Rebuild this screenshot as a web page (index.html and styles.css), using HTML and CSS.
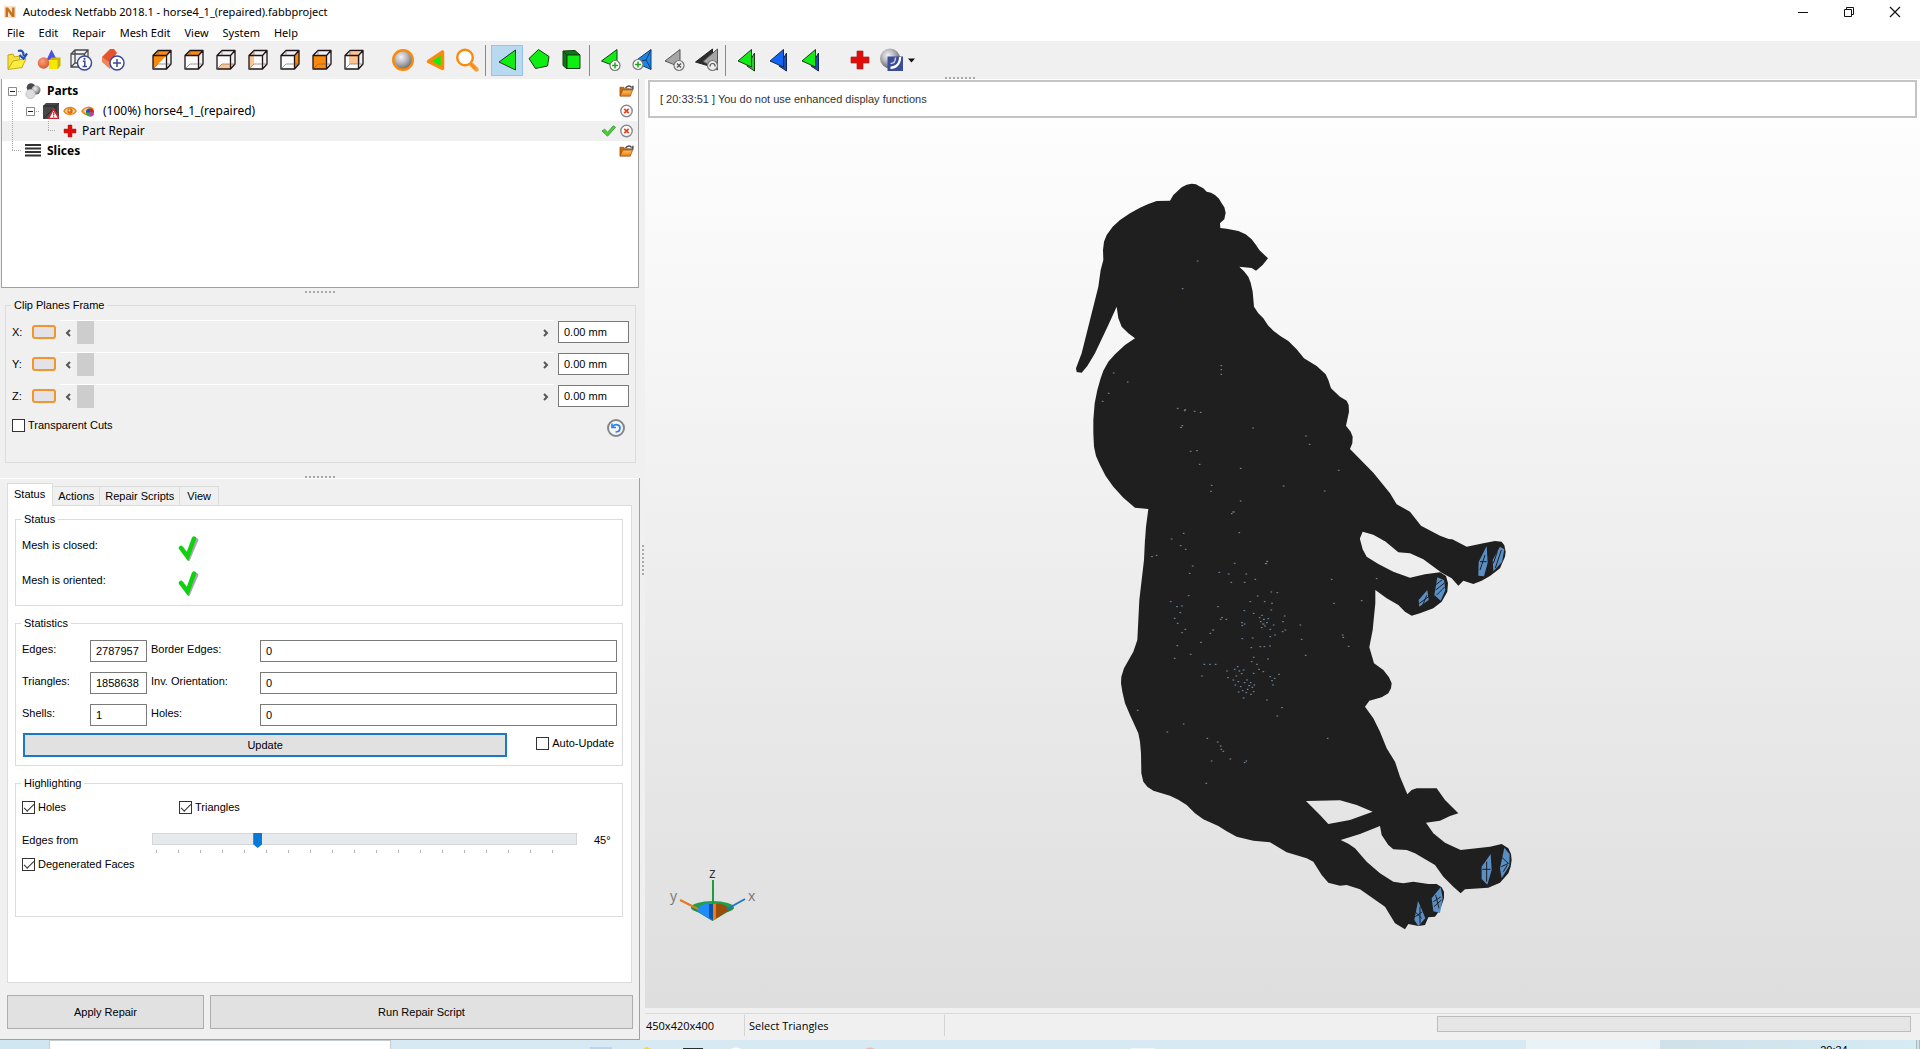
FILE: index.html
```html
<!DOCTYPE html>
<html lang="en">
<head>
<meta charset="utf-8">
<title>Autodesk Netfabb 2018.1 - horse4_1_(repaired).fabbproject</title>
<link rel="stylesheet" href="styles.css">
</head>
<body>
<svg class="defs" aria-hidden="true">
  <defs>
    <radialGradient id="ball" cx=".4" cy=".35" r=".65"><stop offset="0" stop-color="#f4f4f6"/><stop offset=".5" stop-color="#b4b5ba"/><stop offset="1" stop-color="#66686e"/></radialGradient>
    <radialGradient id="redball" cx=".4" cy=".35" r=".7"><stop offset="0" stop-color="#f9a27c"/><stop offset="1" stop-color="#d9542a"/></radialGradient>
    <linearGradient id="folderg" x1="0" y1="0" x2="0" y2="1"><stop offset="0" stop-color="#ffc060"/><stop offset="1" stop-color="#ea7d10"/></linearGradient>
  </defs>
  <symbol id="cube" viewBox="0 0 24 24"><g fill="none" stroke="#1e1418" stroke-width="1.300" stroke-linejoin="round"><path d="M3 7.500h13.500v13.500H3zM3 7.500l5-5h13v13.500l-4.500 5M16.500 7.500l4.500-5"/></g><path d="M8 3v4.500M8 16h8.500M17 16h4M8 16l-5 5" fill="none" stroke="#665c60" stroke-width=".6"/></symbol>
  <symbol id="folder" viewBox="0 0 16 14"><path d="M1 12V3h4l1.500 1.500H11V7" fill="#c9690e" stroke="#8a4a10" stroke-width=".7"/><path d="M1 12.500 4 6h10.500L12 12.500z" fill="url(#folderg)" stroke="#8a4a10" stroke-width=".7"/><path d="M7 4c2-3 5-3 6.500-.5M14.800 1.500V5h-3.500" fill="none" stroke="#4a4a4e" stroke-width="1.500"/></symbol>
  <symbol id="remove" viewBox="0 0 14 14"><circle cx="7" cy="7" r="5.700" fill="#fff" stroke="#85878d" stroke-width="1.400"/><path d="M4.800 4.800l4.400 4.400M9.200 4.800 4.800 9.200" stroke="#e8431c" stroke-width="1.800"/></symbol>
  <symbol id="eye" viewBox="0 0 14 12"><path d="M1 6.200C3.500 1.300 10.500 1.300 13 6.200 10.500 10.500 3.500 10.500 1 6.200z" fill="#fbd3a0" stroke="#e9861a" stroke-width="1.500"/><circle cx="7" cy="6" r="2.700" fill="#d96d05"/><circle cx="6.500" cy="5.500" r="1" fill="#ffe9c8"/></symbol>
  <symbol id="cross" viewBox="0 0 24 24"><path d="M9 3h6v6h6v6h-6v6H9v-6H3V9h6z" fill="#e20d0a" stroke="#9e2a26" stroke-width=".7"/></symbol>
  <symbol id="bigcheck" viewBox="0 0 22 26"><path d="M4 14l6.500 8.500L18 5" fill="none" stroke="#8a6f98" stroke-width="4.500" stroke-linecap="round" opacity=".65"/><path d="M3 13l6.500 8.500L16 3.500" fill="none" stroke="#0fd20f" stroke-width="4.500" stroke-linecap="round"/></symbol>
  <symbol id="minus" viewBox="0 0 9 9"><path d="M.5.5h8v8h-8z" fill="#fff" stroke="#8a8a8a"/><path d="M2 4.500h5" stroke="#222"/></symbol>
</svg>

<header class="titlebar">
  <svg class="logo" viewBox="0 0 14 14"><path d="M1 1h12v12H1z" fill="#f8e2c8"/><path d="M2.500 12V2.500h2.600l4 5.600V2.500h2.400V12H9L5 6.300V12z" fill="#c8701c"/></svg>
  <h1>Autodesk Netfabb 2018.1 - horse4_1_(repaired).fabbproject</h1>
  <div class="window-controls">
    <button aria-label="Minimize"><svg viewBox="0 0 12 12"><path d="M1 6.500h10" stroke="#111"/></svg></button>
    <button aria-label="Restore"><svg viewBox="0 0 12 12"><path d="M1.500 3.500h7v7h-7zM3.500 3.500v-2h7v7h-2" fill="none" stroke="#111"/></svg></button>
    <button aria-label="Close"><svg viewBox="0 0 12 12"><path d="M1 1l10 10M11 1 1 11" stroke="#111" stroke-width="1.200"/></svg></button>
  </div>
</header>

<nav class="menu">
  <button>File</button><button>Edit</button><button>Repair</button><button>Mesh Edit</button><button>View</button><button>System</button><button>Help</button>
</nav>

<div class="toolbar" role="toolbar">
  <div class="tools">
    <button aria-label="Open"><svg viewBox="0 0 24 24"><path d="M3 21V7l5-1 1.500 3 5-1v4" fill="#f5e23c" stroke="#c5a514" stroke-width="1"/><path d="M3 21.500 8 13l13-2.500-4 9z" fill="#fbee3c" stroke="#c9ab18"/><path d="M13 3c4-1.500 6 1 5.500 5M14.500 7l4 3.500L22 5.500" fill="none" stroke="#2350b4" stroke-width="2.200"/></svg></button>
    <button aria-label="Primitives"><svg viewBox="0 0 24 24"><path d="M14.500 1.500 20 12H9.500z" fill="#4a50e4"/><circle cx="6.500" cy="15" r="5.800" fill="url(#redball)"/><path d="M12 12l3-2.500h8.500v8L21 21h-9z" fill="#c9b400"/><path d="M12 12h8.500v9H12z" fill="#f6e800"/></svg></button>
    <button aria-label="Part information"><svg viewBox="0 0 24 24"><g fill="none" stroke="#4a4a4e" stroke-width="1.300"><path d="M2 6l4-4h13v11M2 6h13.500v13H2zM15.500 6 19 2M6 2v13l-4 4M6 15h12"/></g><circle cx="15.500" cy="15" r="7" fill="#fff" stroke="#3c4a94" stroke-width="1.500"/><path d="M13.800 13.300h2v5M13.500 18.500h4.500" fill="none" stroke="#3c4a94" stroke-width="1.500"/><circle cx="15.500" cy="10.800" r="1.100" fill="#3c4a94"/></svg></button>
    <button aria-label="Add part"><svg viewBox="0 0 24 24"><path d="M1 9 9 1h4l3 4-9 12-5-3z" fill="#e5542e"/><path d="M1 9v5l8 7 2-5z" fill="#f38455"/><circle cx="16" cy="15" r="7" fill="#fff" stroke="#3c4a94" stroke-width="1.500"/><path d="M12 15h8M16 11v8" stroke="#3c4a94" stroke-width="1.500"/></svg></button>
  </div>
  <div class="tools">
    <button aria-label="Isometric view"><svg viewBox="0 0 24 24"><path d="M3 7.500h13.500v13.500H3z" fill="#fafafa"/><path d="M3 7.500l5-5h13l-4.500 5zM3 7.500h13.500L3 21z" fill="#fb8a0a"/><use href="#cube"/></svg></button>
    <button aria-label="Top view"><svg viewBox="0 0 24 24"><path d="M3 7.500h13.500v13.500H3z" fill="#fafafa"/><path d="M3 7.500l5-5h13l-4.500 5z" fill="#fb8a0a"/><use href="#cube"/></svg></button>
    <button aria-label="Bottom view"><svg viewBox="0 0 24 24"><path d="M3 7.500h13.500v13.500H3z" fill="#fafafa"/><path d="M3 21l5-5h13l-4.500 5z" fill="#fcc48c"/><use href="#cube"/></svg></button>
    <button aria-label="Left view"><svg viewBox="0 0 24 24"><path d="M3 7.500h13.500v13.500H3z" fill="#fafafa"/><path d="M3 7.500l5-5V16l-5 5z" fill="#fcc48c"/><use href="#cube"/></svg></button>
    <button aria-label="Right view"><svg viewBox="0 0 24 24"><path d="M3 7.500h13.500v13.500H3z" fill="#fafafa"/><path d="M16.500 7.500l4.500-5V16l-4.500 5z" fill="#fb8a0a"/><use href="#cube"/></svg></button>
    <button aria-label="Front view"><svg viewBox="0 0 24 24"><path d="M3 7.500h13.500v13.500H3z" fill="#fb8a0a"/><use href="#cube"/></svg></button>
    <button aria-label="Back view"><svg viewBox="0 0 24 24"><path d="M3 7.500h13.500v13.500H3z" fill="#fafafa"/><path d="M7 4h11v12H7z" fill="#fcc48c"/><use href="#cube"/></svg></button>
  </div>
  <div class="tools">
    <button aria-label="Zoom to all"><svg viewBox="0 0 24 24"><circle cx="12" cy="12" r="9.800" fill="url(#ball)" stroke="#fb8a0a" stroke-width="2.400"/></svg></button>
    <button aria-label="Zoom to triangle"><svg viewBox="0 0 24 24"><path d="M19.500 4v16.500L5.500 13.500z" fill="#10ee10" stroke="#fb8a0a" stroke-width="3.500" stroke-linejoin="round"/></svg></button>
    <button aria-label="Zoom"><svg viewBox="0 0 24 24"><circle cx="10" cy="9.500" r="7.800" fill="#fff" stroke="#fb8a0a" stroke-width="2.400"/><path d="M16.500 16.500l5 5" stroke="#f0a040" stroke-width="4.500" stroke-linecap="round"/><path d="M15 15l5.500 6" stroke="#fb8a0a" stroke-width="2"/></svg></button>
  </div>
  <div class="tools ruled">
    <button class="selected" aria-label="Select triangles"><svg viewBox="0 0 24 24"><path d="M20.500 2v20L4 14z" fill="#0fee12" stroke="#1c3a1c"/></svg></button>
    <button aria-label="Select surface"><svg viewBox="0 0 24 24"><path d="M11.500 1.500 22 8.500 20.500 18l-12 2.500L2 10.500z" fill="#0fee12" stroke="#1c3a1c"/></svg></button>
    <button aria-label="Select shells"><svg viewBox="0 0 24 24"><path d="M4 3l12-.5L21 7H8zM4 3v14.500L8 21V7z" fill="#087c0c" stroke="#123c12"/><path d="M8 7h13v13.500H8z" fill="#0fee12" stroke="#1c3a1c"/></svg></button>
  </div>
  <div class="tools ruled">
    <button aria-label="Add triangle"><svg viewBox="0 0 24 24"><path d="M18 1.500V19L2.500 13z" fill="#0fee12" stroke="#1c3a1c"/><circle cx="16" cy="17.500" r="5" fill="#fff" stroke="#777" stroke-width="1.200"/><path d="M13 17.500h6M16 14.500v6" stroke="#18a818" stroke-width="1.500"/></svg></button>
    <button aria-label="Add node"><svg viewBox="0 0 24 24"><path d="M20 1.500v20L3 14z" fill="#1a86e8" stroke="#123c70"/><path d="M20 2l-5 10 5 9M15 12 3 14" fill="none" stroke="#123c70"/><circle cx="7" cy="16.500" r="5" fill="#fff" stroke="#777" stroke-width="1.200"/><path d="M4 16.500h6M7 13.500v6" stroke="#18a818" stroke-width="1.500"/></svg></button>
    <button aria-label="Remove triangle"><svg viewBox="0 0 24 24"><path d="M17 1.500V19L2 13z" fill="#a6a6a6" stroke="#555"/><circle cx="16" cy="17.500" r="5" fill="#eee" stroke="#777" stroke-width="1.200"/><path d="M14 15.500l4 4M18 15.500l-4 4" stroke="#555" stroke-width="1.300"/></svg></button>
    <button aria-label="Flip triangle"><svg viewBox="0 0 24 24"><path d="M17.500 1v18L.5 14z" fill="#2c2c2e" stroke="#222"/><path d="M22.500 1v21L8 13.500z" fill="#a6a6a6" stroke="#555"/><circle cx="17.500" cy="17.500" r="5" fill="#eee" stroke="#777" stroke-width="1.200"/><path d="M15 18.500c0-4 5.500-4 5 0" fill="none" stroke="#555" stroke-width="1.200"/></svg></button>
  </div>
  <div class="tools ruled">
    <button aria-label="Select all"><svg viewBox="0 0 24 24"><path d="M19.500 5v18L12 18z" fill="#3ac03a" stroke="#1c3a1c"/><path d="M16.500 1.500V19L3 13z" fill="#0fee12" stroke="#1c3a1c"/></svg></button>
    <button aria-label="Deselect all"><svg viewBox="0 0 24 24"><path d="M19.500 5v18L12 18z" fill="#1850b0" stroke="#16264c"/><path d="M16.500 1.500V19L3 13z" fill="#0f66f4" stroke="#16264c"/></svg></button>
    <button aria-label="Invert selection"><svg viewBox="0 0 24 24"><path d="M19.500 5v18L12 18z" fill="#1850b0" stroke="#16264c"/><path d="M16.500 1.500V19L3 13z" fill="#0fee12" stroke="#1c3a1c"/></svg></button>
  </div>
  <div class="tools">
    <button aria-label="Repair"><svg viewBox="0 0 24 24"><use href="#cross"/></svg></button>
    <button aria-label="Shell"><svg viewBox="0 0 24 24"><circle cx="10" cy="10.500" r="10" fill="url(#ball)"/><path d="M7.500 8.500H23V23H7.500z" fill="#3b4c98"/><path d="M10.500 18.500c5 0 8.500-3.500 8.500-9.500h2.200c0 7.500-4.500 12-10.700 12z" fill="#fff"/><path d="M10.500 15.500c3 0 5-2 5-6" fill="none" stroke="#c8cde2" stroke-width="1.500"/></svg></button>
    <svg class="caret" viewBox="0 0 7 5"><path d="M0 .5h7L3.500 4.500z" fill="#111"/></svg>
  </div>
  <span class="grip toolbar-grip"></span>
</div>

<main class="workspace">
  <aside class="side">
    <ul class="tree">
      <li class="root"><span class="guide"><svg class="box"><use href="#minus"/></svg></span>
        <svg class="ico16" viewBox="0 0 16 16"><circle cx="6" cy="4.500" r="4.300" fill="#48484c"/><circle cx="11" cy="7" r="4.500" fill="url(#ball)"/><circle cx="5.500" cy="11" r="4.700" fill="#dcdcde" stroke="#a8a8ac" stroke-width=".5"/></svg>
        <strong>Parts</strong><span class="acts"><button aria-label="Open part"><svg class="act"><use href="#folder"/></svg></button></span></li>
      <li class="child"><span class="guide"><svg class="box"><use href="#minus"/></svg></span>
        <svg class="ico16" viewBox="0 0 16 16"><path d="M0 3l3-3h13v13l-3 3H0z" fill="#47474a"/><path d="M0 3h13v13M13 3l3-3M1 15 12 4" fill="none" stroke="#222" stroke-width=".8"/><path d="M10.500 6 16 15.500H5.500z" fill="#fff" stroke="#d81e2c" stroke-width="1.500"/><path d="M10.700 9v3.500M10.700 13.200v1.300" stroke="#d81e2c" stroke-width="1.200"/></svg>
        <svg class="eye"><use href="#eye"/></svg>
        <svg class="eye" viewBox="0 0 14 12"><path d="M1 6C4 1.500 9 1.500 12 4L8 9.500C5 10 3 9 1 6z" fill="#fbd3a0" stroke="#e9861a" stroke-width="1.500"/><circle cx="9" cy="7.500" r="4" fill="#28b428"/><path d="M9 7.500V3.500a4 4 0 0 1 4 4z" fill="#e02020"/><path d="M9 7.500h4a4 4 0 0 1-4 4z" fill="#d030c8"/><path d="M9 7.500H5a4 4 0 0 1 4-4z" fill="#2448e8"/></svg>
        <span class="name">(100%) horse4_1_(repaired)</span><span class="acts"><button aria-label="Remove part"><svg class="act"><use href="#remove"/></svg></button></span></li>
      <li class="leaf"><span class="guide"></span><svg class="ico16"><use href="#cross"/></svg>
        <span>Part Repair</span><span class="acts"><button aria-label="Apply"><svg class="act" viewBox="0 0 16 14"><path d="M1 7l3-2 3 3.500L13 1.500l2.500 1.500L7 12.500z" fill="#4fd03a" stroke="#2c8c20" stroke-width=".8"/></svg></button><button aria-label="Close repair"><svg class="act"><use href="#remove"/></svg></button></span></li>
      <li class="root last"><span class="guide"></span>
        <svg class="ico16" viewBox="0 0 16 16"><path d="M0 2h16M0 5.500h16M0 9h16M0 12.500h16" stroke="#333" stroke-width="1.800"/></svg>
        <strong>Slices</strong><span class="acts"><button aria-label="Open slices"><svg class="act"><use href="#folder"/></svg></button></span></li>
    </ul>
    <div class="splitter"><span class="grip"></span></div>

    <fieldset class="clip">
      <legend>Clip Planes Frame</legend>
      <div class="clip-rows">
        <div class="clip-row"><label for="cx">X:</label><button class="plane" aria-label="X plane"></button><div class="bar"><svg viewBox="0 0 6 8"><path d="M5 1 2 4l3 3" /></svg><input type="range" aria-label="X position" value="0"><svg viewBox="0 0 6 8"><path d="M1 1l3 3-3 3"/></svg></div><input id="cx" class="box-input" value="0.00 mm"></div>
        <div class="clip-row"><label for="cy">Y:</label><button class="plane" aria-label="Y plane"></button><div class="bar"><svg viewBox="0 0 6 8"><path d="M5 1 2 4l3 3" /></svg><input type="range" aria-label="Y position" value="0"><svg viewBox="0 0 6 8"><path d="M1 1l3 3-3 3"/></svg></div><input id="cy" class="box-input" value="0.00 mm"></div>
        <div class="clip-row"><label for="cz">Z:</label><button class="plane" aria-label="Z plane"></button><div class="bar"><svg viewBox="0 0 6 8"><path d="M5 1 2 4l3 3" /></svg><input type="range" aria-label="Z position" value="0"><svg viewBox="0 0 6 8"><path d="M1 1l3 3-3 3"/></svg></div><input id="cz" class="box-input" value="0.00 mm"></div>
      </div>
      <div class="clip-foot"><label class="check"><input type="checkbox">Transparent Cuts</label>
        <button class="reset" aria-label="Reset"><svg viewBox="0 0 18 18"><circle cx="9" cy="9" r="8" fill="#f6f6f6" stroke="#84868a" stroke-width="2"/><path d="M6 7.500c2-3 7-2 7 1.500 0 2.500-2 4-4.500 4M5 4.500v4h4" fill="none" stroke="#2a86e6" stroke-width="1.700"/></svg></button></div>
    </fieldset>
    <div class="splitter low"><span class="grip"></span></div>

    <section class="repair">
      <div class="tabs" role="tablist"><button role="tab" class="on" aria-selected="true">Status</button><button role="tab">Actions</button><button role="tab">Repair Scripts</button><button role="tab">View</button></div>
      <div class="pane" role="tabpanel">
        <fieldset class="status">
          <legend>Status</legend>
          <div class="line"><span>Mesh is closed:</span><svg><use href="#bigcheck"/></svg></div>
          <div class="line"><span>Mesh is oriented:</span><svg><use href="#bigcheck"/></svg></div>
        </fieldset>
        <fieldset class="stats">
          <legend>Statistics</legend>
          <div class="stat-grid">
            <label for="s1">Edges:</label><input id="s1" class="box-input" value="2787957"><label for="s2">Border Edges:</label><input id="s2" class="box-input" value="0">
            <label for="s3">Triangles:</label><input id="s3" class="box-input" value="1858638"><label for="s4">Inv. Orientation:</label><input id="s4" class="box-input" value="0">
            <label for="s5">Shells:</label><input id="s5" class="box-input" value="1"><label for="s6">Holes:</label><input id="s6" class="box-input" value="0">
          </div>
          <div class="update-row"><button class="update">Update</button><label class="check"><input type="checkbox">Auto-Update</label></div>
        </fieldset>
        <fieldset class="highlight">
          <legend>Highlighting</legend>
          <div class="hl-row"><label class="check"><input type="checkbox" checked>Holes</label><label class="check"><input type="checkbox" checked>Triangles</label></div>
          <div class="edge-row"><label for="angle">Edges from</label><div class="angle"><input id="angle" type="range" min="0" max="185" value="45"><div class="ticks"></div></div><output for="angle">45°</output></div>
          <label class="check"><input type="checkbox" checked>Degenerated Faces</label>
        </fieldset>
      </div>
      <div class="actions"><button>Apply Repair</button><button>Run Repair Script</button></div>
    </section>
  </aside>

  <div class="vsplit"><span class="grip vertical"></span></div>

  <section class="stage">
    <div class="viewport">
      <svg class="scene" viewBox="645 79 1275 929" role="img" aria-label="Horse mesh">
        <g transform="translate(1040 160) scale(.33333)" fill="#1f1f1f">
          <path d="M390 122 400 105 425 82 440 74 455 71 468 73 478 79 490 85 500 95 513 98 525 105 537 116 545 130 553 142 557 158 553 178 540 190 541 204 560 206 595 213 617 223 635 238 648 255 658 270 684 295 668 315 648 332 635 324 598 320 612 334 625 350 632 368 638 395 642 440 655 460 670 475 685 497 700 512 722 529 745 543 770 568 792 595 830 618 857 643 865 660 873 685 900 710 920 722 926 735 927 755 918 797 932 815 938 830 937 850 930 867 1000 938 1050 1000 1070 1033 1110 1055 1143 1097 1200 1127 1240 1142 1032 1142 1000 1124 968 1115 960 1135 960 1142 315 1142 318 1100 325 1047 285 1043 250 1013 220 980 197 948 180 915 168 888 162 860 160 820 160 780 164 730 172 690 182 655 190 632 205 605 225 583 255 555 285 535 265 520 245 500 235 475 230 440 205 495 165 580 142 618 125 638 110 636 108 625 125 580 150 480 175 380 182 330 190 300 189 270 192 245 200 225 218 200 240 180 270 160 300 143 325 132 350 123z"/>
          <g transform="translate(0 1140)">
            <path d="M1028-2 1237-2 1280 20 1330 10 1365 3 1385 5 1393 16 1397 35 1395 50 1380 85 1350 108 1325 122 1300 132 1270 122 1255 137 1235 115 1205 98 1150 58 1110 40 1075 37z"/>
            <path fill-rule="evenodd" d="M315-2H960L968 28 980 50 1015 72 1060 95 1110 113 1155 103 1200 97 1218 108 1224 130 1222 155 1205 185 1180 205 1140 220 1115 227 1095 215 1075 195 1040 175 1006 150 1006 190 998 270 988 322 1002 370 1030 390 1047 412 1055 430 1053 445 1045 460 1025 472 988 482 975 500 1000 535 1020 575 1040 625 1065 665 1080 710 1102 763 1115 750 1130 745 1190 745 1215 780 1255 820 1230 828 1200 842 1158 848 1180 880 1215 908 1262 930 1350 920 1385 912 1405 925 1413 942 1415 960 1412 980 1405 1000 1380 1028 1345 1043 1275 1048 1262 1060 1240 1040 1210 1010 1185 975 1125 940 1100 930 1060 928 1045 915 1035 900 1025 885 1020 858 960 882 902 900 925 911 945 925 980 965 1020 1000 1060 1025 1090 1030 1120 1025 1165 1032 1190 1032 1205 1042 1212 1055 1212 1075 1200 1110 1185 1130 1165 1132 1155 1155 1135 1158 1105 1152 1095 1168 1065 1150 1050 1125 1035 1100 960 1048 920 1035 900 1037 865 1028 845 1005 820 965 800 955 740 937 715 922 690 907 640 902 590 890 560 874 535 858 490 838 465 820 440 795 415 779 390 767 340 752 322 740 310 725 304 700 303 640 300 605 295 580 270 525 255 490 247 455 243 430 244 410 252 385 280 335 292 300 298 180 312 60zM798 783 840 825 865 852 930 840 998 815 950 795 900 781z"/>
            <g fill="#5a8fc6">
              <path d="M1340 18 1316 66 1315 107 1332 109 1343 68zM1380 20 1358 60 1360 94 1386 66 1393 28zM1192 112 1183 165 1202 182 1216 150 1212 120zM1162 150 1136 180 1138 200 1166 180zM1352 942 1325 980 1325 1017 1342 1034 1355 990zM1393 923 1380 985 1385 1015 1408 977 1409 943zM1202 1042 1175 1075 1180 1114 1200 1119 1208 1075zM1134 1083 1123 1140 1135 1158 1156 1135 1146 1110z"/>
            </g>
            <path d="M1320 65h20M1335 45 1320 90M1384 30 1366 84M1372 35 1360 70M1186 135l20-15M1187 150l25-20M1190 165l24-24M1138 190l28-20M1148 196l12-30M1327 988h25M1340 965v60M1383 950l22 20M1384 980l22-10M1390 995l12-20M1180 1085l22-14M1182 1100l22-20M1187 1065l10 40M1125 1115l20 20M1126 1130l20-14M1140 1100v50" stroke="#1f1f1f" stroke-width="3"/>
          </g>
          <path class="specks" d="M472 303h2M427 386h2M543 617h2M543 629h2M543 643h2M220 639h2M262 666h2M205 700h2M187 724h2M412 745h2M435 749h2M433 752h2M463 754h2M481 757h2M426 797h2M422 802h3M638 804h2M797 828h2M808 853h2M451 874h2M470 872h2M478 913h2M601 925h2M730 978h2M895 931h2M853 993h2M514 976h2M512 994h2M601 1023h2M578 1056h5M574 1061h2M597 1118h2M430 1120h2M394 1137h2M421 1157h2M436 1168h2M335 1190h2M349 1186h2M457 1218h2M583 1210h2M680 1204h3M676 1211h4M448 1240h2M537 1237h2M565 1242h2M618 1242h2M573 1267h2M613 1267h2M645 1258h2M874 1258h2M1009 1256h2M445 1307h2M391 1325h2M410 1340h2M425 1338h2M420 1358h2M403 1375h2M412 1390h2M435 1408h2M425 1418h2M533 1340h2M545 1373h2M541 1378h2M518 1410h3M510 1420h2M482 1447h2M558 1378h2M630 1325h2M652 1308h2M693 1296h2M711 1298h2M673 1325h2M695 1330h2M612 1352h2M693 1350h2M605 1388h2M613 1392h2M606 1397h2M640 1360h2M658 1373h2M665 1366h2M670 1378h3M661 1385h2M668 1392h4M674 1398h2M664 1403h2M680 1388h2M684 1376h2M690 1408h2M700 1395h2M704 1425h2M733 1368h2M728 1385h2M727 1415h2M735 1410h2M637 1434h2M606 1436h2M690 1430h2M780 1395h2M784 1438h2M660 1460h2M672 1460h2M689 1458h2M633 1463h2M640 1492h2M634 1505h2M683 1497h2M650 1513h2M796 1486h2M909 1432h2M907 1425h2M925 1459h2M881 1330h2M964 1322h2M403 1495h2M451 1483h2M411 1457h2M492 1513h2M509 1513h2M526 1513h2M485 1548h2M560 1533h2M563 1553h2M583 1528h2M592 1520h2M597 1533h2M610 1530h2M604 1541h2M588 1548h2M579 1560h2M594 1565h2M585 1575h2M601 1580h2M613 1568h2M620 1560h2M626 1577h3M631 1568h2M636 1582h2M622 1588h2M618 1598h2M607 1592h2M595 1596h2M640 1595h2M632 1603h2M642 1575h2M610 1614h2M640 1540h2M656 1528h2M669 1535h2M690 1550h2M695 1562h2M703 1555h2M698 1575h2M716 1543h2M711 1668h2M725 1643h2M680 1620h2M292 1651h2M430 1692h2M381 1716h2M532 1746h2M501 1735h2M541 1758h2M543 1768h2M549 1774h2M570 1797h2M618 1803h2M613 1808h2M862 1735h2M514 1803h2M498 1870h2"/>
        </g>
        <g class="axes">
          <ellipse cx="712.500" cy="907.500" rx="21.500" ry="6.500" fill="#21a04c"/>
          <path d="M691 908 712.500 921 734 908z" fill="#1c8c46"/>
          <path d="M697 911c1-4 6-8 14-8v17z" fill="#1e8cfa"/><path d="M709 904h4v16l-4-2z" fill="#0c54a8"/>
          <path d="M714 904c8-1 14 2 15 6l-15 10z" fill="#9c4c08"/><path d="M713 903.500h3V919l-3 1.500z" fill="#f07c14"/>
          <path d="M713 904V880" stroke="#1f9a3c" stroke-width="2"/><path d="M680 900l18 9" stroke="#e07a1e" stroke-width="2"/><path d="M727 909l18-10" stroke="#1f78c8" stroke-width="2"/>
          <text x="709" y="878">z</text><text x="670" y="901" class="dim">y</text><text x="748" y="901" class="dim">x</text>
        </g>
      </svg>
      <p class="log">[ 20:33:51 ] You do not use enhanced display functions</p>
    </div>
    <footer class="statusbar"><span class="size">450x420x400</span><span class="mode">Select Triangles</span><span class="rest"></span><progress value="0" max="100"></progress></footer>
  </section>
</main>

<div class="taskbar"><span class="start"></span><span class="find"></span><span class="apps"><svg viewBox="0 0 1135 9"><path d="M199 7h22v2h-22z" fill="#b4d6f4"/><path d="M252 9l4-2 4 2z" fill="#f0dc20"/><path d="M292 8h20v1h-20z" fill="#243038"/><path d="M340 9q5-3 10 0z" fill="#fff"/><path d="M474 9q5-3 10 0z" fill="#f4b4b0"/><path d="M740 8h24v1h-24z" fill="#eef6fa"/></svg></span><span class="active"></span><span class="tray"><time>20:34</time></span></div>
</body>
</html>
```
FILE: styles.css
```css
* { box-sizing: border-box; }
body {
  margin: 0;
  height: 100vh;
  display: flex;
  flex-direction: column;
  overflow: hidden;
  background: #f0f0f0;
  color: #000;
  font: 11px/14px "Liberation Sans", Arial, sans-serif;
}
.defs { position: absolute; width: 0; height: 0; }
button { font: inherit; color: inherit; margin: 0; padding: 0; border: 0; background: none; }
input { font: inherit; margin: 0; }
svg { display: block; flex: none; }

/* Title and menu */
.titlebar, .menu, .tree { font-family: "Noto Sans", "Open Sans", sans-serif; }
.titlebar { display: flex; align-items: center; height: 24px; background: #fff; padding-left: 3px; gap: 6px; }
.titlebar h1 { margin: 0; flex: 1; font-size: 11px; font-weight: 400; }
.logo { width: 14px; height: 14px; }
.window-controls { display: flex; padding-right: 2px; }
.window-controls button { width: 46px; height: 20px; display: grid; place-items: center; }
.window-controls svg { width: 12px; height: 12px; }
.menu { display: flex; gap: 14px; height: 17px; padding-left: 7px; background: #fff; font-size: 11px; line-height: 17px; }

/* Toolbar */
.toolbar { position: relative; display: flex; align-items: center; height: 38px; padding-left: 1px; background: #f0f0f0; gap: 17px; }
.tools { display: flex; align-items: center; }
.tools button { width: 32px; height: 31px; display: grid; place-items: center; }
.tools button svg { width: 24px; height: 24px; }
.tools .selected { background: #b9d9f1; border: 1px solid #90c4ee; }
.ruled { border-left: 1px solid #888; padding-left: 5px; margin-left: -15px; }
.caret { width: 7px; height: 5px; }
.grip { display: block; width: 30px; height: 2px; background: repeating-linear-gradient(90deg, #a8a8a8 0 2px, transparent 2px 4px); }
.toolbar-grip { position: absolute; left: 50%; bottom: 0; margin-left: -15px; }

/* Left column */
.workspace { flex: 1; min-height: 0; display: flex; }
.side { width: 640px; display: flex; flex-direction: column; flex: none; }
.tree { list-style: none; margin: 0 1px; padding: 2px 0 0; height: 209px; background: #fff; border: 1px solid #a0a0a0; border-top: 0; font-size: 12px; line-height: 20px; }
.tree li { display: flex; align-items: center; height: 20px; padding-right: 4px; }
.tree strong { margin-left: 6px; }
.tree .leaf { background: #f0f0f0; gap: 4px; }
.guide { align-self: stretch; display: flex; align-items: center; flex: none; margin-right: 3px; }
.root .guide { width: 20px; padding-left: 6px; background: repeating-linear-gradient(90deg, #aaa 0 1px, transparent 1px 2px) 10px 10px / 10px 1px no-repeat; }
.child .guide { width: 38px; padding-left: 24px; background: repeating-linear-gradient(#aaa 0 1px, transparent 1px 2px) 10px 0 / 1px 20px no-repeat, repeating-linear-gradient(90deg, #aaa 0 1px, transparent 1px 2px) 32px 10px / 6px 1px no-repeat; }
.leaf .guide { width: 53px; background: repeating-linear-gradient(#aaa 0 1px, transparent 1px 2px) 10px 0 / 1px 20px no-repeat, repeating-linear-gradient(#aaa 0 1px, transparent 1px 2px) 46px 0 / 1px 10px no-repeat, repeating-linear-gradient(90deg, #aaa 0 1px, transparent 1px 2px) 46px 9px / 8px 1px no-repeat; }
.last .guide { background: repeating-linear-gradient(#aaa 0 1px, transparent 1px 2px) 10px 0 / 1px 10px no-repeat, repeating-linear-gradient(90deg, #aaa 0 1px, transparent 1px 2px) 10px 9px / 10px 1px no-repeat; }
.box { width: 9px; height: 9px; }
.ico16 { width: 16px; height: 16px; }
.eye { width: 14px; height: 12px; margin-left: 4px; }
.name { margin-left: 8px; }
.acts { margin-left: auto; display: flex; gap: 3px; }
.act { width: 15px; height: 14px; }
.splitter { height: 8px; flex: none; display: flex; justify-content: center; align-items: center; }
.low { align-items: flex-end; }

fieldset { margin: 0; min-width: 0; border: 1px solid #dcdcdc; padding: 0; }
legend { margin-left: 5px; padding: 0 3px; }
.box-input { width: 100%; min-width: 0; height: 22px; border: 1px solid #7a7a7a; background: #fff; padding: 0 5px; }

.clip { margin: 2px 4px 7px 5px; height: 165px; }
.clip-rows { padding-top: 4px; }
.clip-row { display: grid; grid-template-columns: 16px 24px 494px 71px; align-items: center; height: 32px; padding-left: 6px; column-gap: 4px; }
.plane { width: 24px; height: 14px; border: 2px solid #f0962c; border-radius: 3px; background: #e4e2e6; }
.bar { display: flex; align-items: center; height: 24px; border-top: 1px solid #fff; padding: 0 5px; }
.bar svg { width: 6px; height: 8px; fill: none; stroke: #555; stroke-width: 2; }
.bar input { appearance: none; flex: 1; min-width: 0; height: 23px; margin: 0 6px; background: none; }
.bar input::-webkit-slider-thumb { appearance: none; width: 17px; height: 23px; background: #cdcdcd; }
.clip-foot { display: flex; justify-content: space-between; align-items: flex-start; padding: 6px 10px 0 6px; }
.reset { padding-top: 1px; }
.reset svg { width: 18px; height: 18px; }

.check { display: flex; align-items: center; gap: 3px; }
.check input { appearance: none; width: 13px; height: 13px; border: 1px solid #333; background: #fff; display: grid; place-items: center; }
.check input:checked::after { content: ""; width: 9px; height: 4px; border: solid #333; border-width: 0 0 1px 1px; transform: translateY(-1px) rotate(-45deg); }

.repair { flex: 1; display: flex; flex-direction: column; border: solid #a0a0a0; border-width: 0 1px 1px 0; box-shadow: inset 0 1px #fff; padding: 5px 6px 10px 7px; }
.tabs { display: flex; align-items: flex-end; height: 23px; margin-bottom: -1px; }
.tabs button { height: 20px; padding: 0 5px; border: 1px solid #dcdcdc; border-left: 0; }
.tabs .on { height: 23px; padding: 0 7px 3px 6px; background: #fff; border: 1px solid #dcdcdc; border-bottom: 0; z-index: 1; }
.tabs button:last-child { padding: 0 7px; }
.pane { flex: 1; background: #fff; border: 1px solid #dcdcdc; padding: 6px 8px 0 7px; margin-right: 1px; }
.status { height: 94px; }
.line { display: grid; grid-template-columns: 156px 22px; height: 35px; align-items: center; padding-left: 6px; }
.line svg { width: 22px; height: 26px; margin-top: 6px; }
.status legend + .line { margin-top: 1px; }
.stats { height: 150px; margin-top: 10px; }
.stat-grid { display: grid; grid-template-columns: 68px 57px 4px 109px 1fr; row-gap: 10px; align-items: center; padding: 10px 5px 0 6px; }
.stat-grid label { padding-bottom: 4px; }
.stat-grid label:nth-of-type(even) { grid-column: 4; }
.update-row { display: flex; gap: 29px; padding: 7px 8px 0 7px; }
.update-row .check { padding-bottom: 4px; }
.update { flex: 1; height: 24px; border: 2px solid #1a78c4; background: #e1e1e1; }
.highlight { height: 141px; margin-top: 10px; }
.hl-row { display: grid; grid-template-columns: 157px 1fr; padding: 10px 6px 0; }
.edge-row { display: grid; grid-template-columns: 130px 425px 1fr; height: 35px; margin-top: 8px; padding-left: 6px; align-items: center; }
.highlight > .check { padding-left: 6px; }
.edge-row output { padding-left: 17px; }
.angle { padding-top: 7px; }
.angle input { display: block; appearance: none; width: 100%; height: 15px; background: linear-gradient(#e7eaec, #e7eaec) 1px 1px / 423px 10px no-repeat, linear-gradient(#d6d6d6, #d6d6d6) 0 0 / 100% 12px no-repeat; }
.angle input::-webkit-slider-thumb { appearance: none; width: 9px; height: 15px; background: #0a78d6; clip-path: polygon(0 0, 100% 0, 100% 75%, 50% 100%, 0 75%); }
.ticks { height: 3px; margin: 2px 4px 0; background: repeating-linear-gradient(90deg, #b4b4b4 0 1px, transparent 1px 22px); }
.actions { display: grid; grid-template-columns: 197px 1fr; gap: 6px; padding-top: 12px; }
.actions button { height: 34px; background: #e1e1e1; border: 1px solid #adadad; }

/* 3D view */
.vsplit { width: 5px; flex: none; display: grid; justify-content: center; padding-top: 466px; }
.vertical { width: 2px; height: 30px; background: repeating-linear-gradient(#a8a8a8 0 2px, transparent 2px 4px); }
.stage { flex: 1; min-width: 0; display: flex; flex-direction: column; }
.viewport { position: relative; flex: 1; min-height: 0; background: linear-gradient(#fff, #dedede); }
.scene { position: absolute; inset: 0; width: 100%; height: 100%; }
.specks { stroke: #a9cdee; stroke-width: 2; stroke-linecap: square; }
.axes text { font: 14px "Open Sans", sans-serif; fill: #333; }
.axes .dim { fill: #777; }
.log { position: relative; margin: 1px 3px; height: 38px; border: 2px solid #c4c4c4; background: #fff; padding: 0 10px; line-height: 34px; color: #333; }
.statusbar { display: flex; height: 32px; border-top: 5px solid #f0f0f0; box-shadow: inset 0 1px #dadada; background: #f0f0f0; font-family: "Open Sans", "Noto Sans", sans-serif; padding-right: 9px; align-items: flex-start; }
.statusbar span { border-right: 1px solid #d4d4d4; height: 21px; margin-top: 2px; line-height: 22px; }
.size { width: 100px; padding-left: 1px; }
.mode { width: 200px; padding-left: 4px; }
.statusbar .rest { flex: 1; border: 0; }
progress { appearance: none; width: 474px; height: 16px; margin-top: 3px; border: 1px solid #bcbcbc; background: #e6e6e6; }
progress::-webkit-progress-bar { background: #e6e6e6; }

/* Desktop task bar */
.taskbar { flex: none; display: flex; height: 9px; overflow: hidden; background: #d7e9f2; }
.start { width: 49px; background: #d0e7f1; }
.find { width: 343px; background: #fff; border: 1px solid #c4ccd0; border-bottom: 0; }
.apps { flex: 1; }
.apps svg { width: 1135px; height: 9px; }
.active { width: 134px; background: #e9f2f6; }
.tray { width: 260px; background: linear-gradient(90deg, #cfe0e8, #d6ebf4); border-right: 4px double #a9bac2; padding-left: 160px; }
.tray time { display: block; padding-top: 3px; font-size: 11px; line-height: 14px; }
```
